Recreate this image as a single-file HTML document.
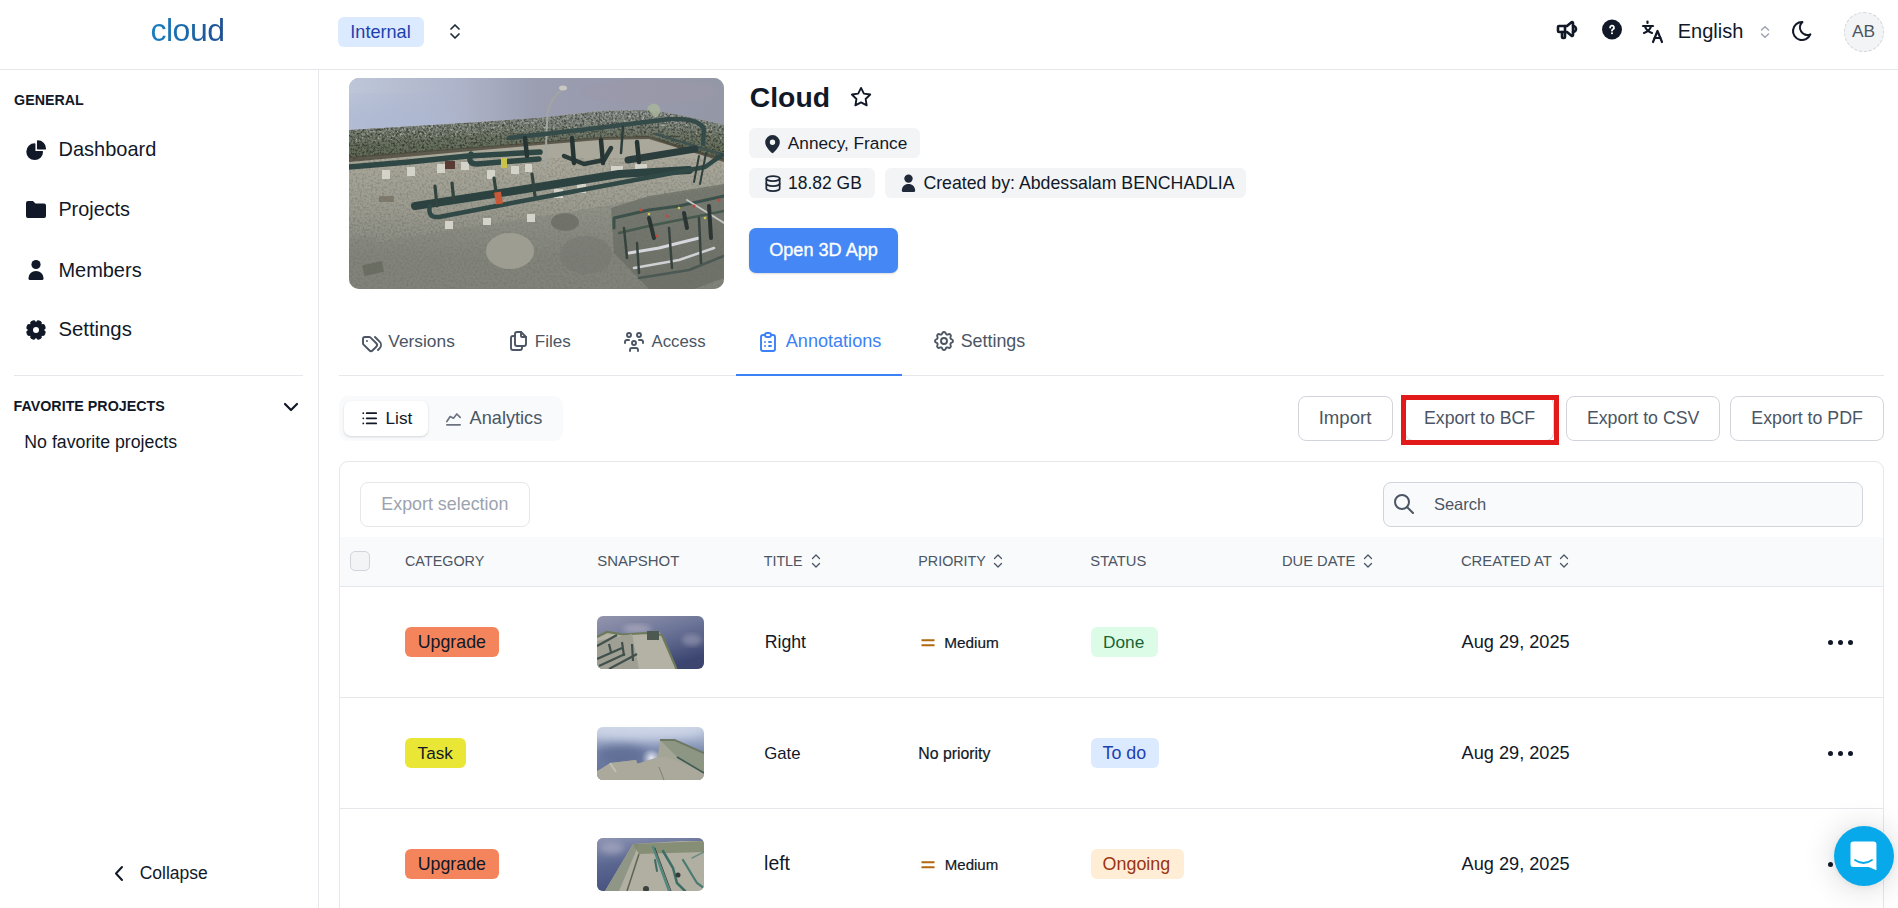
<!DOCTYPE html>
<html><head><meta charset="utf-8"><title>Cloud - Annotations</title>
<style>
html,body{margin:0;padding:0;background:#fff;width:1898px;height:908px;overflow:hidden;position:relative;font-family:"Liberation Sans",sans-serif;}
.t{position:absolute;white-space:nowrap;line-height:1;}
svg{overflow:visible}
</style></head><body>
<div style="position:absolute;left:0px;top:69px;width:1898px;height:1px;background:#e5e7eb"></div>
<div class="t" style="left:150.5px;top:14px;font-size:32px;color:#1a6fb5;font-weight:400;letter-spacing:-0.5px;background:linear-gradient(90deg,#1a7fc1,#1d4f8f);-webkit-background-clip:text;color:transparent;">cloud</div>
<div style="position:absolute;left:338px;top:17px;width:86px;height:30px;background:#dbeafe;border-radius:6px"></div>
<div class="t" style="left:350.3px;top:23px;font-size:18.1px;color:#1e40af;font-weight:400;">Internal</div>
<svg style="position:absolute;left:447.5px;top:23px;" width="14" height="17" viewBox="0 0 14 17"><path d="M3 6 L7 2 L11 6 M3 11 L7 15 L11 11" fill="none" stroke="#1f2937" stroke-width="1.7" stroke-linecap="round" stroke-linejoin="round"/></svg>
<svg style="position:absolute;left:1555px;top:18px;" width="24" height="24" viewBox="0 0 24 24"><g fill="none" stroke="#111827" stroke-width="2.6" stroke-linecap="round" stroke-linejoin="round"><path d="M18 8a3 3 0 0 1 0 6"/><path d="M10 8v11a1 1 0 0 1 -1 1h-1a1 1 0 0 1 -1 -1v-5"/><path d="M12 8l4.524 -3.77a.9 .9 0 0 1 1.476 .692v12.156a.9 .9 0 0 1 -1.476 .692l-4.524 -3.77h-8a1 1 0 0 1 -1 -1v-4a1 1 0 0 1 1 -1h8"/></g></svg>
<svg style="position:absolute;left:1602px;top:19px;" width="20" height="21" viewBox="0 0 20 21"><circle cx="10" cy="10.5" r="10" fill="#111827"/><path d="M8.1 8.6a1.95 1.9 0 1 1 2.8 1.7c-.55.33-.9.65-.9 1.4" fill="none" stroke="#fff" stroke-width="1.8" stroke-linecap="round"/><circle cx="10" cy="14.3" r="1.05" fill="#fff"/></svg>
<svg style="position:absolute;left:1641px;top:19px;" width="24" height="25" viewBox="0 0 24 25"><g fill="none" stroke="#111827" stroke-width="2.2" stroke-linecap="round" stroke-linejoin="round"><path d="M2 7h10"/><path d="M6.5 2.5v1.5"/><path d="M4 7.5c1 3 3 5.2 7 6.5"/><path d="M10 7.5c-1 3-3 5.2-7 6.5"/><path d="M12 23l4.5-11 4.5 11"/><path d="M13.6 19h5.8"/></g></svg>
<div class="t" style="left:1677.7px;top:21px;font-size:20.01px;color:#111827;font-weight:400;">English</div>
<svg style="position:absolute;left:1757px;top:24px;" width="16" height="16" viewBox="0 0 16 16"><path d="M4.5 6 L8 2.8 L11.5 6 M4.5 10 L8 13.2 L11.5 10" fill="none" stroke="#9ca3af" stroke-width="1.5" stroke-linecap="round" stroke-linejoin="round"/></svg>
<svg style="position:absolute;left:1790px;top:19px;" width="24" height="24" viewBox="0 0 24 24"><path d="M12 3c.132 0 .263 0 .393 0a7.5 7.5 0 0 0 7.92 12.446a9 9 0 1 1 -8.313 -12.454z" fill="none" stroke="#111827" stroke-width="2.1" stroke-linecap="round" stroke-linejoin="round"/></svg>
<div style="position:absolute;left:1844px;top:12px;width:40px;height:40px;background:#f3f4f6;border-radius:50%;box-sizing:border-box;border:1px dashed #d1d5db"></div>
<div class="t" style="left:1851.9px;top:23px;font-size:17.38px;color:#4b5563;font-weight:400;">AB</div>
<div style="position:absolute;left:318px;top:70px;width:1px;height:838px;background:#e5e7eb"></div>
<div class="t" style="left:14.1px;top:93px;font-size:14.25px;color:#111827;font-weight:700;">GENERAL</div>
<div class="t" style="left:58.5px;top:139px;font-size:19.99px;color:#111827;font-weight:400;">Dashboard</div>
<div class="t" style="left:58.4px;top:200px;font-size:19.84px;color:#111827;font-weight:400;">Projects</div>
<div class="t" style="left:58.4px;top:260px;font-size:19.98px;color:#111827;font-weight:400;">Members</div>
<div class="t" style="left:58.4px;top:319px;font-size:20.34px;color:#111827;font-weight:400;">Settings</div>
<svg style="position:absolute;left:23.6px;top:137.8px;" width="24.4" height="24.4" viewBox="0 0 24 24"><path fill="#111827" d="M2.25 13.5a8.25 8.25 0 0 1 8.25-8.25.75.75 0 0 1 .75.75v6.75H18a.75.75 0 0 1 .75.75 8.25 8.25 0 0 1-16.5 0Z"/><path fill="#111827" d="M12.75 3a.75.75 0 0 1 .75-.75 8.25 8.25 0 0 1 8.25 8.25.75.75 0 0 1-.75.75h-7.5a.75.75 0 0 1-.75-.75V3Z"/></svg>
<svg style="position:absolute;left:25px;top:200px;" width="22" height="19" viewBox="0 0 22 19"><path d="M1 3a2 2 0 0 1 2-2h5l2.5 2.5H19a2 2 0 0 1 2 2V16a2 2 0 0 1-2 2H3a2 2 0 0 1-2-2Z" fill="#111827"/></svg>
<svg style="position:absolute;left:27px;top:259px;" width="18" height="22" viewBox="0 0 18 22"><circle cx="9" cy="5.5" r="4.6" fill="#111827"/><path d="M1.5 19.5c0-4.5 3.3-7.5 7.5-7.5s7.5 3 7.5 7.5a1.5 1.5 0 0 1-1.5 1.5H3a1.5 1.5 0 0 1-1.5-1.5Z" fill="#111827"/></svg>
<svg style="position:absolute;left:26.2px;top:320px;" width="20" height="20" viewBox="0 0 20 20"><g transform="translate(10 10)" fill="#111827"><rect x="-2.9" y="-10" width="5.8" height="5" rx="2.2" transform="rotate(22.5)"/><rect x="-2.9" y="-10" width="5.8" height="5" rx="2.2" transform="rotate(67.5)"/><rect x="-2.9" y="-10" width="5.8" height="5" rx="2.2" transform="rotate(112.5)"/><rect x="-2.9" y="-10" width="5.8" height="5" rx="2.2" transform="rotate(157.5)"/><rect x="-2.9" y="-10" width="5.8" height="5" rx="2.2" transform="rotate(202.5)"/><rect x="-2.9" y="-10" width="5.8" height="5" rx="2.2" transform="rotate(247.5)"/><rect x="-2.9" y="-10" width="5.8" height="5" rx="2.2" transform="rotate(292.5)"/><rect x="-2.9" y="-10" width="5.8" height="5" rx="2.2" transform="rotate(337.5)"/><circle r="8"/><circle r="3" fill="#fff"/></g></svg>
<div style="position:absolute;left:14px;top:375px;width:289px;height:1px;background:#e5e7eb"></div>
<div class="t" style="left:13.6px;top:399px;font-size:14.28px;color:#111827;font-weight:700;">FAVORITE PROJECTS</div>
<svg style="position:absolute;left:282px;top:400px;" width="18" height="14" viewBox="0 0 18 14"><path d="M3 4 L9 10 L15 4" fill="none" stroke="#111827" stroke-width="2.2" stroke-linecap="round" stroke-linejoin="round"/></svg>
<div class="t" style="left:24.3px;top:434px;font-size:17.74px;color:#111827;font-weight:400;">No favorite projects</div>
<svg style="position:absolute;left:112px;top:865px;" width="14" height="17" viewBox="0 0 14 17"><path d="M10 2 L4 8.5 L10 15" fill="none" stroke="#111827" stroke-width="2" stroke-linecap="round" stroke-linejoin="round"/></svg>
<div class="t" style="left:139.7px;top:865px;font-size:17.51px;color:#111827;font-weight:400;">Collapse</div>
<svg style="position:absolute;left:349px;top:78px" width="375" height="211" viewBox="0 0 375 211"><defs><clipPath id="bc"><rect x="0" y="0" width="375" height="211" rx="10"/></clipPath><linearGradient id="sky" x1="0" y1="0" x2="1" y2="0"><stop offset="0" stop-color="#bec6d9"/><stop offset="0.3" stop-color="#adb3c8"/><stop offset="0.5" stop-color="#9b9eb1"/><stop offset="1" stop-color="#9397a6"/></linearGradient><linearGradient id="skyb" x1="0" y1="0" x2="0.5" y2="0"><stop offset="0" stop-color="#a9b5d0" stop-opacity="0.9"/><stop offset="1" stop-color="#a9b5d0" stop-opacity="0"/></linearGradient><linearGradient id="gnd" x1="0" y1="0" x2="0" y2="1"><stop offset="0.38" stop-color="#aaa89a"/><stop offset="0.62" stop-color="#9b9b90"/><stop offset="0.85" stop-color="#83857c"/><stop offset="1" stop-color="#82847b"/></linearGradient><linearGradient id="fence" x1="0" y1="0" x2="0" y2="1"><stop offset="0" stop-color="#8a908c"/><stop offset="0.5" stop-color="#6f7868"/><stop offset="1" stop-color="#5d6752"/></linearGradient><filter id="grain" x="0" y="0" width="100%" height="100%"><feTurbulence type="fractalNoise" baseFrequency="0.45" numOctaves="2" seed="3"/><feColorMatrix type="matrix" values="0 0 0 0 0  0 0 0 0 0  0 0 0 0 0  0 0 0 -3 1.75"/><feComposite operator="in" in2="SourceAlpha"/></filter><filter id="grainw" x="0" y="0" width="100%" height="100%"><feTurbulence type="fractalNoise" baseFrequency="0.45" numOctaves="2" seed="7"/><feColorMatrix type="matrix" values="0 0 0 0 1  0 0 0 0 1  0 0 0 0 1  0 0 0 3 -1.6"/><feComposite operator="in" in2="SourceAlpha"/></filter></defs><g clip-path="url(#bc)"><rect width="375" height="211" fill="url(#gnd)"/><path d="M0 0H375V47 L330 37 L300 32 L250 33 L190 40 L100 46 L0 52Z" fill="url(#sky)"/><filter id="blr"><feGaussianBlur stdDeviation="12"/></filter><ellipse cx="30" cy="45" rx="80" ry="25" fill="#a9b5d0" opacity="0.6" filter="url(#blr)"/><ellipse cx="300" cy="14" rx="70" ry="12" fill="#9c98aa" opacity="0.5"/><path d="M0 52 L100 46 L190 40 L250 33 L300 32 L330 37 L375 47 V82 L330 70 L300 59 L250 60 L190 65 L100 72 L0 80Z" fill="url(#fence)"/><g filter="url(#grain)" opacity="0.45"><path d="M0 52 L100 46 L190 40 L250 33 L300 32 L330 37 L375 47 V82 L330 70 L300 59 L250 60 L190 65 L100 72 L0 80Z"/></g><g filter="url(#grainw)" opacity="0.45"><path d="M0 52 L100 46 L190 40 L250 33 L300 32 L330 37 L375 47 V62 L300 46 L190 53 L0 65Z"/></g><path d="M0 79 L100 71 L190 64 L250 59 L300 58 L375 81 V84 L300 61 L250 62 L190 67 L100 75 L0 84Z" fill="#4a463a" opacity="0.8"/><g stroke="#4f574c" stroke-width="1.2" opacity="0.8"><path d="M17 55 L21 78"/><path d="M57 51 L62 75"/><path d="M98 47 L103 72"/><path d="M130 45 L134 69"/><path d="M160 42 L163 66"/><path d="M250 34 L252 59"/><path d="M290 33 L293 58"/><path d="M340 40 L345 70"/></g><path d="M298 30 q6 -8 12 -2 q4 8 -4 12z" fill="#a9b79a" opacity="0.8"/><g filter="url(#grain)" opacity="0.12"><rect y="80" width="375" height="131"/></g><path d="M0 161 L26 158 L28 165 L95 153 L207 136 L257 128 L300 120 L375 108 V211 H0Z" fill="#80827a" opacity="0.45"/><ellipse cx="161" cy="173" rx="24" ry="18" fill="#9f9e92" opacity="0.95"/><ellipse cx="216" cy="144" rx="14" ry="9" fill="#6a6c64" opacity="0.8"/><ellipse cx="237" cy="177" rx="26" ry="19" fill="#73756f" opacity="0.5"/><path d="M262 130 L300 118 L375 106 V200 L345 211 H300 L265 175Z" fill="#62675e" opacity="0.6"/><path d="M196 91 L198.5 35 Q202 18 216 10" fill="none" stroke="#a3a5a0" stroke-width="2"/><ellipse cx="214" cy="10" rx="4" ry="2.5" fill="#c9c9c3"/><g fill="#d4d3ca"><rect x="33" y="92" width="8" height="9"/><rect x="58" y="89" width="8" height="9"/><rect x="88" y="86" width="8" height="9"/><rect x="112" y="84" width="8" height="8"/><rect x="138" y="92" width="8" height="9"/><rect x="162" y="88" width="8" height="8"/><rect x="176" y="86" width="7" height="8"/><rect x="205" y="111" width="9" height="9"/><rect x="228" y="106" width="9" height="9"/><rect x="262" y="88" width="12" height="11"/><rect x="286" y="86" width="12" height="9"/><rect x="178" y="136" width="8" height="8"/><rect x="96" y="143" width="8" height="8"/><rect x="134" y="140" width="8" height="7"/></g><g fill="none" stroke-linecap="round" stroke-linejoin="round"><path d="M0 89 L60 84 L119 78 L191 74" stroke="#2f4744" stroke-width="5.5"/><path d="M122 76 Q118 86 128 86 L190 81" stroke="#2f4744" stroke-width="5.5"/><path d="M160 60 L240 51 L321 41 Q352 40 355 52 L354 66" stroke="#344b4a" stroke-width="4.5"/><path d="M274 49 L272 75" stroke="#2c3d3b" stroke-width="2.5"/><path d="M307 56 L375 77" stroke="#3f5250" stroke-width="2.5"/><path d="M66 128 L158 114 L270 96 L340 92" stroke="#2b4240" stroke-width="8"/><path d="M81 128 Q78 140 90 139 L168 124 L302 99 L356 89 L373 77" stroke="#304846" stroke-width="4.5"/><path d="M279 82 L346 71" stroke="#2b3e3d" stroke-width="7"/><path d="M215 78 L235 86 L255 82 L262 70" stroke="#2a3b3a" stroke-width="4.5"/><path d="M223 60 L225 85 M252 62 L254 85 M288 64 L290 84 M176 60 L178 78" stroke="#263533" stroke-width="4.5"/><path d="M86 108 L88 128 M103 105 L105 124 M145 100 L148 120 M183 96 L186 118" stroke="#33443f" stroke-width="3.2"/><path d="M357 75 L351 106 M350 78 L345 104" stroke="#2f3f3c" stroke-width="2"/><path d="M265 150 L265 140 L300 132 L330 128 L375 118" stroke="#3c514b" stroke-width="3"/><path d="M270 155 L300 148 L340 140 L375 133" stroke="#45594f" stroke-width="2.5"/><path d="M280 175 L310 170 L350 160" stroke="#d6d6dc" stroke-width="3"/><path d="M285 190 L330 182 L365 170" stroke="#cfd0d4" stroke-width="2.5"/><path d="M290 200 L340 192 L375 178" stroke="#4b5853" stroke-width="2.5"/><path d="M338 122 L375 145" stroke="#c2c4c2" stroke-width="2"/><path d="M288 165 L290 195 M320 150 L323 190 M350 140 L352 185 M275 150 L278 180" stroke="#37433f" stroke-width="2.5"/><path d="M300 140 L305 160 M335 135 L338 150 M360 128 L362 160" stroke="#2b3533" stroke-width="4"/></g><g fill="#c8453a"><circle cx="292" cy="132" r="1.5"/><circle cx="318" cy="138" r="1.5"/><circle cx="345" cy="128" r="1.5"/><circle cx="370" cy="122" r="1.5"/><circle cx="308" cy="158" r="1.5"/></g><g fill="#cfc74c"><circle cx="300" cy="136" r="1.3"/><circle cx="330" cy="130" r="1.3"/><circle cx="356" cy="140" r="1.3"/></g><rect x="146" y="114" width="7" height="12" fill="#c65a38" transform="rotate(-10 150 120)"/><rect x="96" y="83" width="10" height="8" fill="#5a3a35"/><rect x="152" y="80" width="6" height="10" fill="#c8c24a"/><rect x="14" y="185" width="20" height="11" fill="#5a5c50" opacity="0.55" transform="rotate(-12 24 190)"/><rect x="30" y="118" width="15" height="6" fill="#6a6656" opacity="0.6"/></g></svg>
<div class="t" style="left:749.8px;top:83px;font-size:28.32px;color:#111827;font-weight:700;">Cloud</div>
<svg style="position:absolute;left:849.5px;top:85.5px;" width="22.1" height="22.1" viewBox="0 0 24 24"><path d="M12 17.75l-6.172 3.245l1.179 -6.873l-5 -4.867l6.9 -1l3.086 -6.253l3.086 6.253l6.9 1l-5 4.867l1.179 6.873z" fill="none" stroke="#111827" stroke-width="2" stroke-linejoin="round"/></svg>
<div style="position:absolute;left:749px;top:128px;width:171px;height:30px;background:#f3f4f6;border-radius:6px"></div>
<svg style="position:absolute;left:764px;top:134px;" width="17" height="20" viewBox="0 0 17 20"><path fill="#1f2937" fill-rule="evenodd" d="M8.5 1A7.3 7.3 0 0 0 1.2 8.3c0 4.6 5.3 9.5 6.5 10.5a1.2 1.2 0 0 0 1.6 0c1.2-1 6.5-5.9 6.5-10.5A7.3 7.3 0 0 0 8.5 1Zm0 4.6a2.7 2.7 0 1 0 0 5.4 2.7 2.7 0 0 0 0-5.4Z"/></svg>
<div class="t" style="left:787.8px;top:135px;font-size:17.24px;color:#111827;font-weight:400;">Annecy, France</div>
<div style="position:absolute;left:749px;top:168px;width:126px;height:30px;background:#f3f4f6;border-radius:6px"></div>
<svg style="position:absolute;left:762.5px;top:173px;" width="20" height="21" viewBox="0 0 24 24"><g fill="none" stroke="#1f2937" stroke-width="2.1" stroke-linecap="round" stroke-linejoin="round"><path d="M4 6a8 3 0 1 0 16 0a8 3 0 1 0 -16 0"/><path d="M4 6v6a8 3 0 0 0 16 0v-6"/><path d="M4 12v6a8 3 0 0 0 16 0v-6"/></g></svg>
<div class="t" style="left:788.1px;top:175px;font-size:17.44px;color:#111827;font-weight:400;">18.82 GB</div>
<div style="position:absolute;left:885px;top:168px;width:361px;height:30px;background:#f3f4f6;border-radius:6px"></div>
<svg style="position:absolute;left:901px;top:174px;" width="15" height="19" viewBox="0 0 15 19"><circle cx="7.5" cy="4.6" r="4.2" fill="#1f2937"/><path d="M0.8 16.5c0-3.9 3-6.6 6.7-6.6s6.7 2.7 6.7 6.6a1.6 1.6 0 0 1-1.6 1.6H2.4a1.6 1.6 0 0 1-1.6-1.6Z" fill="#1f2937"/></svg>
<div class="t" style="left:923.4px;top:175px;font-size:17.73px;color:#111827;font-weight:400;">Created by: Abdessalam BENCHADLIA</div>
<div style="position:absolute;left:749px;top:228px;width:149px;height:45px;background:#4587f4;border-radius:7px;box-shadow:0 1px 2px rgba(0,0,0,.15)"></div>
<div class="t" style="left:769.2px;top:241px;font-size:18.13px;color:#ffffff;font-weight:400;-webkit-text-stroke:0.35px #fff">Open 3D App</div>
<div style="position:absolute;left:339px;top:375px;width:1545px;height:1px;background:#e5e7eb"></div>
<div style="position:absolute;left:736px;top:374px;width:166px;height:2px;background:#3b82f6"></div>
<svg style="position:absolute;left:360px;top:331px;" width="24" height="24" viewBox="0 0 24 24"><g fill="none" stroke="#4b5563" stroke-width="1.9" stroke-linecap="round" stroke-linejoin="round"><path d="M3 8v4.172a2 2 0 0 0 .586 1.414l5.71 5.71a2.41 2.41 0 0 0 3.408 0l3.592 -3.592a2.41 2.41 0 0 0 0 -3.408l-5.71 -5.71a2 2 0 0 0 -1.414 -.586h-4.172a2 2 0 0 0 -2 2z"/><path d="M18 19l1.592 -1.592a4.82 4.82 0 0 0 0 -6.816l-4.592 -4.592"/><path d="M7 10h-.01"/></g></svg>
<div class="t" style="left:388.3px;top:333px;font-size:17.35px;color:#4b5563;font-weight:400;">Versions</div>
<svg style="position:absolute;left:506px;top:329px;" width="24" height="24" viewBox="0 0 24 24"><g fill="none" stroke="#4b5563" stroke-width="1.9" stroke-linecap="round" stroke-linejoin="round"><path d="M15 3v4a1 1 0 0 0 1 1h4"/><path d="M18 17h-7a2 2 0 0 1 -2 -2v-10a2 2 0 0 1 2 -2h4l5 5v7a2 2 0 0 1 -2 2z"/><path d="M16 17v2a2 2 0 0 1 -2 2h-7a2 2 0 0 1 -2 -2v-10a2 2 0 0 1 2 -2h2"/></g></svg>
<div class="t" style="left:534.8px;top:333px;font-size:17.09px;color:#4b5563;font-weight:400;">Files</div>
<svg style="position:absolute;left:622px;top:330px;" width="24" height="24" viewBox="0 0 24 24"><g fill="none" stroke="#4b5563" stroke-width="1.9" stroke-linecap="round" stroke-linejoin="round"><path d="M10 13a2 2 0 1 0 4 0a2 2 0 0 0 -4 0"/><path d="M8 21v-1a2 2 0 0 1 2 -2h4a2 2 0 0 1 2 2v1"/><path d="M15 5a2 2 0 1 0 4 0a2 2 0 0 0 -4 0"/><path d="M17 10h2a2 2 0 0 1 2 2v1"/><path d="M5 5a2 2 0 1 0 4 0a2 2 0 0 0 -4 0"/><path d="M3 13v-1a2 2 0 0 1 2 -2h2"/></g></svg>
<div class="t" style="left:651.5px;top:334px;font-size:16.79px;color:#4b5563;font-weight:400;">Access</div>
<svg style="position:absolute;left:756px;top:330px;" width="24" height="24" viewBox="0 0 24 24"><g fill="none" stroke="#3b82f6" stroke-width="1.9" stroke-linecap="round" stroke-linejoin="round"><path d="M9 5h-2a2 2 0 0 0 -2 2v12a2 2 0 0 0 2 2h10a2 2 0 0 0 2 -2v-12a2 2 0 0 0 -2 -2h-2"/><path d="M9 5a2 2 0 0 1 2 -2h2a2 2 0 0 1 2 2a2 2 0 0 1 -2 2h-2a2 2 0 0 1 -2 -2z"/><path d="M9 12l.01 0"/><path d="M13 12l2 0"/><path d="M9 16l.01 0"/><path d="M13 16l2 0"/></g></svg>
<div class="t" style="left:785.8px;top:332px;font-size:18.09px;color:#3b82f6;font-weight:400;">Annotations</div>
<svg style="position:absolute;left:932px;top:329px;" width="24" height="24" viewBox="0 0 24 24"><g fill="none" stroke="#4b5563" stroke-width="1.9" stroke-linecap="round" stroke-linejoin="round"><path d="M10.325 4.317c.426 -1.756 2.924 -1.756 3.35 0a1.724 1.724 0 0 0 2.573 1.066c1.543 -.94 3.31 .826 2.37 2.37a1.724 1.724 0 0 0 1.065 2.572c1.756 .426 1.756 2.924 0 3.35a1.724 1.724 0 0 0 -1.066 2.573c.94 1.543 -.826 3.31 -2.37 2.37a1.724 1.724 0 0 0 -2.572 1.065c-.426 1.756 -2.924 1.756 -3.35 0a1.724 1.724 0 0 0 -2.573 -1.066c-1.543 .94 -3.31 -.826 -2.37 -2.37a1.724 1.724 0 0 0 -1.065 -2.572c-1.756 -.426 -1.756 -2.924 0 -3.35a1.724 1.724 0 0 0 1.066 -2.573c-.94 -1.543 .826 -3.31 2.37 -2.37c1 .608 2.296 .07 2.572 -1.065z"/><path d="M9 12a3 3 0 1 0 6 0a3 3 0 0 0 -6 0"/></g></svg>
<div class="t" style="left:960.7px;top:333px;font-size:17.86px;color:#4b5563;font-weight:400;">Settings</div>
<div style="position:absolute;left:339px;top:396px;width:224px;height:45px;background:#f9fafb;border-radius:9px"></div>
<div style="position:absolute;left:344px;top:401px;width:84px;height:35px;background:#fff;border-radius:7px;box-shadow:0 1px 3px rgba(0,0,0,.10),0 1px 2px rgba(0,0,0,.06)"></div>
<svg style="position:absolute;left:358.8px;top:407.5px;" width="20.6" height="20.6" viewBox="0 0 24 24"><g fill="none" stroke="#111827" stroke-width="2.1" stroke-linecap="round" stroke-linejoin="round"><path d="M9 6l11 0"/><path d="M9 12l11 0"/><path d="M9 18l11 0"/><path d="M5 6l0 .01"/><path d="M5 12l0 .01"/><path d="M5 18l0 .01"/></g></svg>
<div class="t" style="left:385.5px;top:410px;font-size:17.23px;color:#111827;font-weight:400;">List</div>
<svg style="position:absolute;left:443px;top:409px;" width="21" height="20" viewBox="0 0 24 24"><g fill="none" stroke="#6b7280" stroke-width="2" stroke-linecap="round" stroke-linejoin="round"><path d="M4 19l16 0"/><path d="M4 15l4 -6l4 2l4 -5l4 4"/></g></svg>
<div class="t" style="left:469.6px;top:409px;font-size:18.16px;color:#4b5563;font-weight:400;">Analytics</div>
<div style="position:absolute;left:1298px;top:396px;width:95px;height:45px;box-sizing:border-box;border:1px solid #d1d5db;border-radius:8px;background:#fff"></div>
<div class="t" style="left:1318.7px;top:409px;font-size:18.6px;color:#4b5563;font-weight:400;">Import</div>
<div style="position:absolute;left:1405px;top:396px;width:149px;height:45px;box-sizing:border-box;border:1px solid #d1d5db;border-radius:8px;background:#fff"></div>
<div class="t" style="left:1424.0px;top:410px;font-size:17.7px;color:#4b5563;font-weight:400;">Export to BCF</div>
<div style="position:absolute;left:1566px;top:396px;width:154px;height:45px;box-sizing:border-box;border:1px solid #d1d5db;border-radius:8px;background:#fff"></div>
<div class="t" style="left:1586.9px;top:410px;font-size:17.77px;color:#4b5563;font-weight:400;">Export to CSV</div>
<div style="position:absolute;left:1730px;top:396px;width:154px;height:45px;box-sizing:border-box;border:1px solid #d1d5db;border-radius:8px;background:#fff"></div>
<div class="t" style="left:1751.3px;top:410px;font-size:17.78px;color:#4b5563;font-weight:400;">Export to PDF</div>
<div style="position:absolute;left:1401px;top:395px;width:158px;height:50px;box-sizing:border-box;border:5px solid #e31a1a"></div>
<div style="position:absolute;left:339px;top:461px;width:1545px;height:460px;box-sizing:border-box;border:1px solid #e5e7eb;border-radius:9px"></div>
<div style="position:absolute;left:360px;top:482px;width:170px;height:45px;box-sizing:border-box;border:1px solid #e5e7eb;border-radius:8px"></div>
<div class="t" style="left:381.3px;top:496px;font-size:17.86px;color:#9ca3af;font-weight:400;">Export selection</div>
<div style="position:absolute;left:1383px;top:482px;width:480px;height:45px;box-sizing:border-box;border:1px solid #d1d5db;border-radius:8px;background:#f9fafb"></div>
<svg style="position:absolute;left:1392px;top:492px;" width="24" height="24" viewBox="0 0 24 24"><g fill="none" stroke="#4b5563" stroke-width="2" stroke-linecap="round" stroke-linejoin="round"><path d="M3 10a7 7 0 1 0 14 0a7 7 0 1 0 -14 0"/><path d="M21 21l-6 -6"/></g></svg>
<div class="t" style="left:1433.9px;top:496px;font-size:16.51px;color:#4b5563;font-weight:400;">Search</div>
<div style="position:absolute;left:340px;top:537px;width:1543px;height:49px;background:#f9fafb"></div>
<div style="position:absolute;left:340px;top:586px;width:1543px;height:1px;background:#e5e7eb"></div>
<div style="position:absolute;left:350px;top:551px;width:20px;height:20px;box-sizing:border-box;border:1px solid #d1d5db;border-radius:5px;background:#f3f4f6"></div>
<div class="t" style="left:405.0px;top:554px;font-size:14.37px;color:#4b5563;font-weight:400;">CATEGORY</div>
<div class="t" style="left:597.2px;top:554px;font-size:14.95px;color:#4b5563;font-weight:400;">SNAPSHOT</div>
<div class="t" style="left:763.7px;top:554px;font-size:14.29px;color:#4b5563;font-weight:400;">TITLE</div>
<svg style="position:absolute;left:809.6px;top:553px;" width="12" height="16" viewBox="0 0 12 16"><path d="M2.5 5.5 L6 2 L9.5 5.5 M2.5 10.5 L6 14 L9.5 10.5" fill="none" stroke="#4b5563" stroke-width="1.3" stroke-linecap="round" stroke-linejoin="round"/></svg>
<div class="t" style="left:918.3px;top:554px;font-size:14.3px;color:#4b5563;font-weight:400;">PRIORITY</div>
<svg style="position:absolute;left:992.4px;top:553px;" width="12" height="16" viewBox="0 0 12 16"><path d="M2.5 5.5 L6 2 L9.5 5.5 M2.5 10.5 L6 14 L9.5 10.5" fill="none" stroke="#4b5563" stroke-width="1.3" stroke-linecap="round" stroke-linejoin="round"/></svg>
<div class="t" style="left:1090.3px;top:554px;font-size:14.76px;color:#4b5563;font-weight:400;">STATUS</div>
<div class="t" style="left:1282.0px;top:554px;font-size:14.69px;color:#4b5563;font-weight:400;">DUE DATE</div>
<svg style="position:absolute;left:1361.6px;top:553px;" width="12" height="16" viewBox="0 0 12 16"><path d="M2.5 5.5 L6 2 L9.5 5.5 M2.5 10.5 L6 14 L9.5 10.5" fill="none" stroke="#4b5563" stroke-width="1.3" stroke-linecap="round" stroke-linejoin="round"/></svg>
<div class="t" style="left:1460.9px;top:554px;font-size:14.83px;color:#4b5563;font-weight:400;">CREATED AT</div>
<svg style="position:absolute;left:1558px;top:553px;" width="12" height="16" viewBox="0 0 12 16"><path d="M2.5 5.5 L6 2 L9.5 5.5 M2.5 10.5 L6 14 L9.5 10.5" fill="none" stroke="#4b5563" stroke-width="1.3" stroke-linecap="round" stroke-linejoin="round"/></svg>
<div style="position:absolute;left:405px;top:627px;width:94px;height:30px;background:#f4845c;border-radius:6px"></div>
<div class="t" style="left:417.8px;top:634px;font-size:17.76px;color:#111827;font-weight:400;">Upgrade</div>
<svg style="position:absolute;left:597px;top:616px" width="107" height="53" viewBox="0 0 107 53"><defs><clipPath id="sc1"><rect width="107" height="53" rx="6"/></clipPath><filter id="blr1"><feGaussianBlur stdDeviation="2.5"/></filter><linearGradient id="s1" x1="0" y1="0" x2="0.6" y2="1"><stop offset="0" stop-color="#9596ad"/><stop offset="0.5" stop-color="#6c7598"/><stop offset="1" stop-color="#3c4570"/></linearGradient></defs><g clip-path="url(#sc1)"><rect width="107" height="53" fill="url(#s1)"/><ellipse cx="95" cy="24" rx="10" ry="6" fill="#9a9cb4" opacity="0.6" filter="url(#blr1)"/><ellipse cx="40" cy="13" rx="14" ry="5" fill="#b4b0c2" opacity="0.6" filter="url(#blr1)"/><path d="M0 21 L10 16 L26 18.5 L50 17 L62 16 L65 19 L79.5 53 H0Z" fill="#b4b2a5"/><path d="M0 21 L10 16 L26 18.5 L50 17 L65 19 L79.5 53" fill="none" stroke="#6c7a5a" stroke-width="2.2"/><path d="M50 15 h12 v9 h-12z" fill="#4c5850"/><path d="M0 25 L35 18 L42 53 H0Z" fill="#a09f94"/><g stroke="#40504c" stroke-width="2.2" fill="none"><path d="M0 30 L20 19"/><path d="M0 43 L25 32"/><path d="M2 50 L28 38"/><path d="M12 53 L40 38"/><path d="M12 28 L14 36 M25 26 L27 40 M35 28 L36 45"/></g></g></svg>
<div class="t" style="left:764.7px;top:634px;font-size:17.71px;color:#111827;font-weight:400;">Right</div>
<svg style="position:absolute;left:919px;top:637px;" width="18" height="12" viewBox="0 0 18 12"><path d="M2.5 3.3h13M2.5 8.3h13" stroke="#b0690e" stroke-width="2" stroke-linecap="butt"/></svg>
<div class="t" style="left:944.2px;top:635px;font-size:15.33px;color:#111827;font-weight:400;-webkit-text-stroke:0.2px #111827">Medium</div>
<div style="position:absolute;left:1091px;top:627px;width:67px;height:30px;background:#dcfce7;border-radius:6px"></div>
<div class="t" style="left:1103.0px;top:634px;font-size:17.28px;color:#166534;font-weight:400;">Done</div>
<div class="t" style="left:1461.5px;top:633px;font-size:18.19px;color:#111827;font-weight:400;">Aug 29, 2025</div>
<div style="position:absolute;left:1827.9px;top:639.9px;width:5.2px;height:5.2px;background:#111827;border-radius:50%"></div>
<div style="position:absolute;left:1837.9px;top:639.9px;width:5.2px;height:5.2px;background:#111827;border-radius:50%"></div>
<div style="position:absolute;left:1847.9px;top:639.9px;width:5.2px;height:5.2px;background:#111827;border-radius:50%"></div>
<div style="position:absolute;left:340px;top:697px;width:1543px;height:1px;background:#e5e7eb"></div>
<div style="position:absolute;left:405px;top:738px;width:61px;height:30px;background:#e9e635;border-radius:6px"></div>
<div class="t" style="left:417.6px;top:745px;font-size:17.14px;color:#111827;font-weight:400;">Task</div>
<svg style="position:absolute;left:597px;top:727px" width="107" height="53" viewBox="0 0 107 53"><defs><clipPath id="sc2"><rect width="107" height="53" rx="6"/></clipPath><filter id="blr2" x="-50%" y="-50%" width="200%" height="200%"><feGaussianBlur stdDeviation="4"/></filter><linearGradient id="s2" x1="0" y1="0" x2="0" y2="1"><stop offset="0" stop-color="#c9d3e6"/><stop offset="0.45" stop-color="#7d8bb0"/><stop offset="1" stop-color="#5c6a93"/></linearGradient><radialGradient id="s2b" cx="0.5" cy="0.5" r="0.5"><stop offset="0" stop-color="#eef0f8"/><stop offset="1" stop-color="#eef0f8" stop-opacity="0"/></radialGradient></defs><g clip-path="url(#sc2)"><rect width="107" height="53" fill="url(#s2)"/><ellipse cx="54" cy="31" rx="10" ry="9" fill="url(#s2b)"/><ellipse cx="45" cy="4" rx="60" ry="9" fill="#d0d9ea" opacity="0.7" filter="url(#blr2)"/><ellipse cx="25" cy="28" rx="25" ry="10" fill="#55628a" opacity="0.6" filter="url(#blr2)"/><path d="M0 44.3 L13.5 36 L39 33 L40.5 36.7 L60.6 30.4 L63 12.9 L77.5 12.9 L107 26 V53 H0Z" fill="#a3a596"/><path d="M0 44.3 L13.5 36 L39 33 L40.5 36.7 L60.6 30.4 L70 30 L107 45 V53 H0Z" fill="#aaa99b"/><path d="M63 12.9 L77.5 12.9 L107 26 L107 45 L80 30 Z" fill="#8d9583"/><path d="M63 12.9 L77.5 12.9 L107 26" fill="none" stroke="#6c7764" stroke-width="2"/><path d="M80 30 L107 46" fill="none" stroke="#3f5a52" stroke-width="1.6"/><path d="M62 40 L67 53" fill="none" stroke="#7c8274" stroke-width="1"/><path d="M13 36 L19 45" fill="none" stroke="#c2c0b2" stroke-width="2"/></g></svg>
<div class="t" style="left:764.3px;top:746px;font-size:16.74px;color:#111827;font-weight:400;">Gate</div>
<div class="t" style="left:918.3px;top:746px;font-size:15.84px;color:#111827;font-weight:400;-webkit-text-stroke:0.2px #111827">No priority</div>
<div style="position:absolute;left:1091px;top:738px;width:68px;height:30px;background:#dbeafe;border-radius:6px"></div>
<div class="t" style="left:1102.6px;top:745px;font-size:17.84px;color:#1e40af;font-weight:400;">To do</div>
<div class="t" style="left:1461.5px;top:744px;font-size:18.19px;color:#111827;font-weight:400;">Aug 29, 2025</div>
<div style="position:absolute;left:1827.9px;top:750.9px;width:5.2px;height:5.2px;background:#111827;border-radius:50%"></div>
<div style="position:absolute;left:1837.9px;top:750.9px;width:5.2px;height:5.2px;background:#111827;border-radius:50%"></div>
<div style="position:absolute;left:1847.9px;top:750.9px;width:5.2px;height:5.2px;background:#111827;border-radius:50%"></div>
<div style="position:absolute;left:340px;top:808px;width:1543px;height:1px;background:#e5e7eb"></div>
<div style="position:absolute;left:405px;top:849px;width:94px;height:30px;background:#f4845c;border-radius:6px"></div>
<div class="t" style="left:417.8px;top:856px;font-size:17.76px;color:#111827;font-weight:400;">Upgrade</div>
<svg style="position:absolute;left:597px;top:838px" width="107" height="53" viewBox="0 0 107 53"><defs><clipPath id="sc3"><rect width="107" height="53" rx="6"/></clipPath><filter id="blr3" x="-50%" y="-50%" width="200%" height="200%"><feGaussianBlur stdDeviation="3"/></filter><linearGradient id="s3" x1="0" y1="0" x2="0.3" y2="1"><stop offset="0" stop-color="#8c93b3"/><stop offset="0.5" stop-color="#5a6690"/><stop offset="1" stop-color="#46527e"/></linearGradient></defs><g clip-path="url(#sc3)"><rect width="107" height="53" fill="#b1afa1"/><path d="M0 0 H107 V3 L85 3 L36 6 L8 53 H0Z" fill="url(#s3)"/><ellipse cx="15" cy="10" rx="12" ry="6" fill="#aeb0c6" opacity="0.6" filter="url(#blr3)"/><path d="M8 53 L36 6 L42 6 L22 53Z" fill="#8f9686"/><path d="M36 6 L107 3 L107 14 L42 16Z" fill="#7f8a6f" opacity="0.85"/><path d="M30 53 L42 16" fill="none" stroke="#5d6451" stroke-width="1.5"/><g fill="none" stroke-linecap="round"><path d="M56 9 L72 53" stroke="#4f8880" stroke-width="2.2"/><path d="M58 10 L74 53" stroke="#2b3533" stroke-width="0.8"/><path d="M66 13 L76 30 L80 45 L88 53" stroke="#3f6e66" stroke-width="2.5"/><path d="M86 22 L100 45 L107 50" stroke="#4a7b72" stroke-width="2.2"/><path d="M95 20 L107 14" stroke="#6a8c84" stroke-width="1.5"/><path d="M58 22 L60 33" stroke="#3e6b63" stroke-width="2"/></g><circle cx="81" cy="37" r="2.5" fill="#333b3a"/><circle cx="49" cy="51" r="3" fill="#3a403d"/></g></svg>
<div class="t" style="left:764.1px;top:854px;font-size:19.42px;color:#111827;font-weight:400;">left</div>
<svg style="position:absolute;left:919px;top:859px;" width="18" height="12" viewBox="0 0 18 12"><path d="M2.5 3.3h13M2.5 8.3h13" stroke="#b0690e" stroke-width="2" stroke-linecap="butt"/></svg>
<div class="t" style="left:944.8px;top:857px;font-size:15.02px;color:#111827;font-weight:400;-webkit-text-stroke:0.2px #111827">Medium</div>
<div style="position:absolute;left:1091px;top:849px;width:93px;height:30px;background:#ffedd5;border-radius:6px"></div>
<div class="t" style="left:1102.6px;top:856px;font-size:17.89px;color:#9a3412;font-weight:400;">Ongoing</div>
<div class="t" style="left:1461.5px;top:855px;font-size:18.19px;color:#111827;font-weight:400;">Aug 29, 2025</div>
<div style="position:absolute;left:1827.9px;top:861.9px;width:5.2px;height:5.2px;background:#111827;border-radius:50%"></div>
<div style="position:absolute;left:1837.9px;top:861.9px;width:5.2px;height:5.2px;background:#111827;border-radius:50%"></div>
<div style="position:absolute;left:1847.9px;top:861.9px;width:5.2px;height:5.2px;background:#111827;border-radius:50%"></div>
<div style="position:absolute;left:1834px;top:826px;width:60px;height:60px;background:#07a9ea;border-radius:50%;box-shadow:0 1px 6px rgba(0,0,0,.06),0 2px 32px rgba(0,0,0,.16)"></div>
<svg style="position:absolute;left:1850px;top:840px;" width="28" height="32" viewBox="0 0 28 32"><path d="M3 1h21a3 3 0 0 1 3 3v27l-8-3.5H3a3 3 0 0 1-3-3V4a3 3 0 0 1 3-3Z" fill="#fff" transform="translate(0.5,0.5) scale(0.96)"/><path d="M5 20 q8.5 6 17 0" fill="none" stroke="#07a9ea" stroke-width="1.8" stroke-linecap="round"/></svg>
</body></html>
